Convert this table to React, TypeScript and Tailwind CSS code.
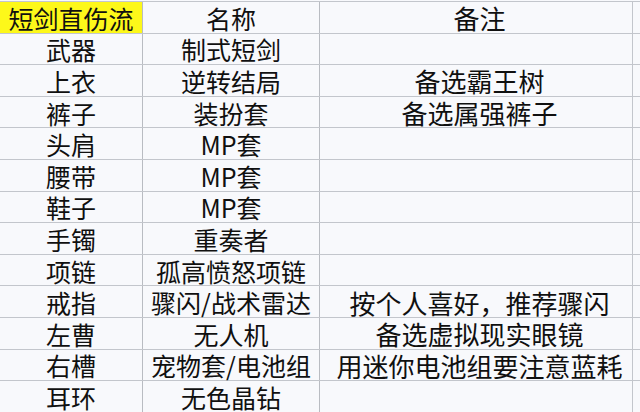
import React from "react";

const rows: [string, string, string][] = [
  ["武器", "制式短剑", ""],
  ["上衣", "逆转结局", "备选霸王树"],
  ["裤子", "装扮套", "备选属强裤子"],
  ["头肩", "MP套", ""],
  ["腰带", "MP套", ""],
  ["鞋子", "MP套", ""],
  ["手镯", "重奏者", ""],
  ["项链", "孤高愤怒项链", ""],
  ["戒指", "骤闪/战术雷达", "按个人喜好，推荐骤闪"],
  ["左曹", "无人机", "备选虚拟现实眼镜"],
  ["右槽", "宠物套/电池组", "用迷你电池组要注意蓝耗"],
  ["耳环", "无色晶钻", ""],
];

function Row({ a, b, c, header }: { a: string; b: string; c: string; header?: boolean }) {
  return (
    <div className="grid grid-cols-[143px_177px_313px_7px] h-[31.6px] border-b border-[#c3c6cc]">
      <div
        className={
          "flex items-center justify-center border-r border-[#b9bcc2] pt-[2px] " +
          (header ? "bg-[#fdf81a]" : "")
        }
      >
        {a}
      </div>
      <div className="flex items-center justify-center border-r border-[#b9bcc2] whitespace-nowrap pt-[2px]">
        {b}
      </div>
      <div className="flex items-center justify-center border-r border-[#c3c6cc] pl-[7px] whitespace-nowrap text-[26px] pt-[2px]">
        {c}
      </div>
      <div />
    </div>
  );
}

export default function App() {
  return (
    <div
      className="w-[640px] h-[412px] overflow-hidden bg-[#f8f9fc] text-[#101010] text-[25px] leading-none pt-[1px]"
      style={{ fontFamily: '"Noto Sans CJK SC", "Noto Sans", sans-serif' }}
    >
      <div className="border-t border-[#c3c6cc]">
        <Row a="短剑直伤流" b="名称" c="备注" header />
        {rows.map((r, i) => (
          <Row key={i} a={r[0]} b={r[1]} c={r[2]} />
        ))}
      </div>
    </div>
  );
}
